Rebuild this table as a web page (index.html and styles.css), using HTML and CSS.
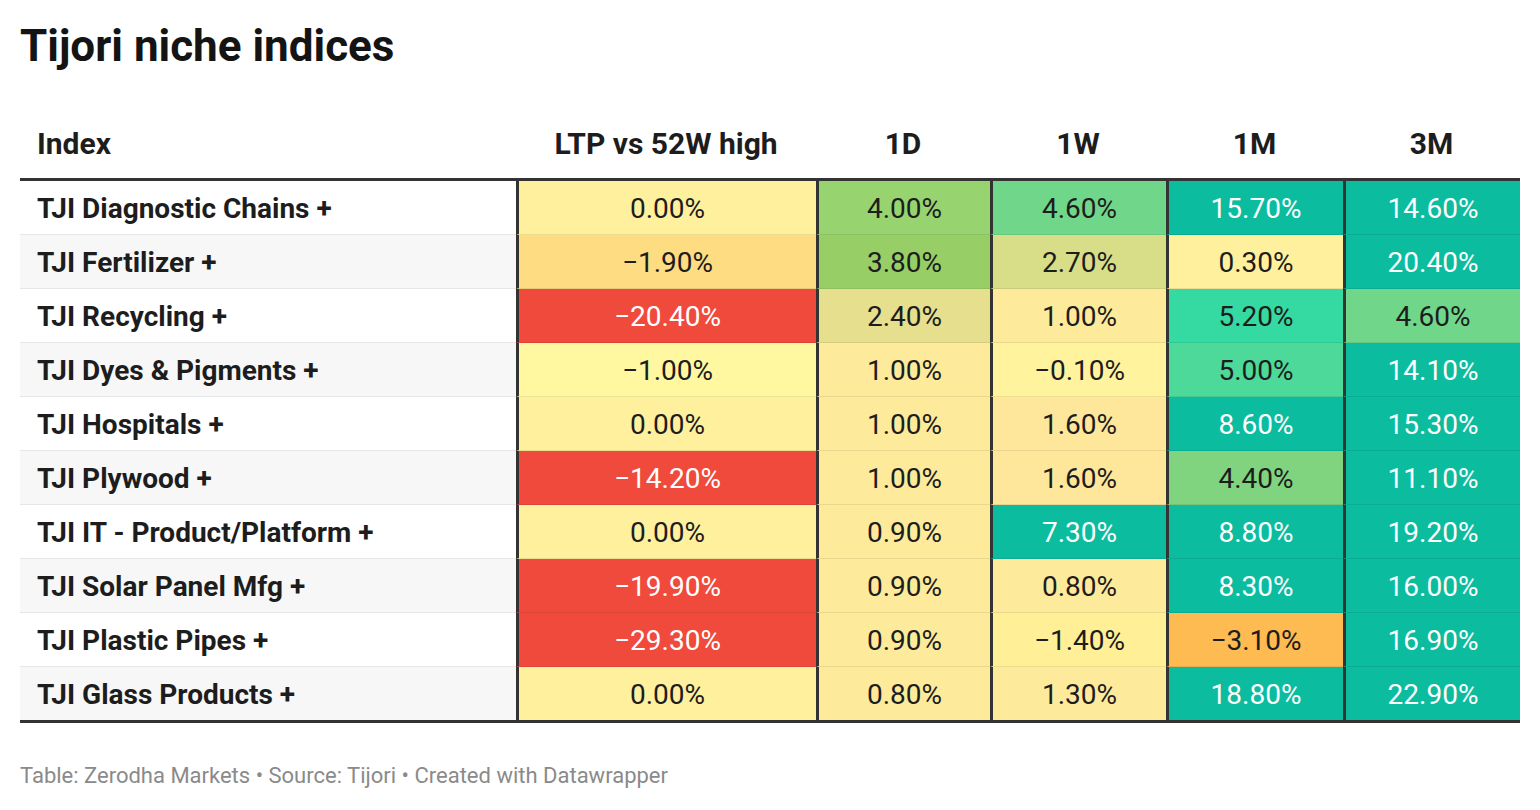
FILE: index.html
```html
<!DOCTYPE html>
<html lang="en">
<head>
<meta charset="utf-8">
<title>Tijori niche indices</title>
<link rel="stylesheet" href="styles.css">
</head>
<body>
<div class="chart">
  <h1 class="title">Tijori niche indices</h1>
  <table class="heat">
    <thead>
      <tr>
        <th class="c-name">Index</th>
        <th class="c-ltp">LTP vs 52W high</th>
        <th class="c-1d">1D</th>
        <th class="c-1w">1W</th>
        <th class="c-1m">1M</th>
        <th class="c-3m">3M</th>
      </tr>
    </thead>
    <tbody>
      <tr>
        <td class="name">TJI Diagnostic Chains +</td>
        <td class="y0">0.00%</td>
        <td class="g4">4.00%</td>
        <td class="g5">4.60%</td>
        <td class="teal">15.70%</td>
        <td class="teal">14.60%</td>
      </tr>
      <tr>
        <td class="name">TJI Fertilizer +</td>
        <td class="o1">−1.90%</td>
        <td class="g3">3.80%</td>
        <td class="g2">2.70%</td>
        <td class="y0">0.30%</td>
        <td class="teal">20.40%</td>
      </tr>
      <tr>
        <td class="name">TJI Recycling +</td>
        <td class="red">−20.40%</td>
        <td class="g1">2.40%</td>
        <td class="y1">1.00%</td>
        <td class="m5">5.20%</td>
        <td class="g5">4.60%</td>
      </tr>
      <tr>
        <td class="name">TJI Dyes &amp; Pigments +</td>
        <td class="yb">−1.00%</td>
        <td class="y1">1.00%</td>
        <td class="ym">−0.10%</td>
        <td class="m4">5.00%</td>
        <td class="teal">14.10%</td>
      </tr>
      <tr>
        <td class="name">TJI Hospitals +</td>
        <td class="y0">0.00%</td>
        <td class="y1">1.00%</td>
        <td class="y2">1.60%</td>
        <td class="teal">8.60%</td>
        <td class="teal">15.30%</td>
      </tr>
      <tr>
        <td class="name">TJI Plywood +</td>
        <td class="red">−14.20%</td>
        <td class="y1">1.00%</td>
        <td class="y2">1.60%</td>
        <td class="g44">4.40%</td>
        <td class="teal">11.10%</td>
      </tr>
      <tr>
        <td class="name">TJI IT - Product/Platform +</td>
        <td class="y0">0.00%</td>
        <td class="y1">0.90%</td>
        <td class="teal">7.30%</td>
        <td class="teal">8.80%</td>
        <td class="teal">19.20%</td>
      </tr>
      <tr>
        <td class="name">TJI Solar Panel Mfg +</td>
        <td class="red">−19.90%</td>
        <td class="y1">0.90%</td>
        <td class="y1">0.80%</td>
        <td class="teal">8.30%</td>
        <td class="teal">16.00%</td>
      </tr>
      <tr>
        <td class="name">TJI Plastic Pipes +</td>
        <td class="red">−29.30%</td>
        <td class="y1">0.90%</td>
        <td class="ym2">−1.40%</td>
        <td class="o3">−3.10%</td>
        <td class="teal">16.90%</td>
      </tr>
      <tr>
        <td class="name">TJI Glass Products +</td>
        <td class="y0">0.00%</td>
        <td class="y1">0.80%</td>
        <td class="y1">1.30%</td>
        <td class="teal">18.80%</td>
        <td class="teal">22.90%</td>
      </tr>
    </tbody>
  </table>
  <p class="footer">Table: Zerodha Markets • Source: Tijori • Created with Datawrapper</p>
</div>
</body>
</html>
```

FILE: styles.css
```css
html, body {
  margin: 0;
  padding: 0;
  background: #ffffff;
}

body {
  font-family: Roboto, "Liberation Sans", sans-serif;
  color: #1d1d1d;
}

.chart {
  padding: 20px 20px 0 20px;
}

.title {
  margin: 0;
  font-size: 44px;
  line-height: 53px;
  font-weight: 700;
  color: #141414;
}

.heat {
  margin-top: 42px;
  width: 1500px;
  border-collapse: separate;
  border-spacing: 0;
  table-layout: fixed;
}

.heat th,
.heat td {
  box-sizing: border-box;
  padding: 0;
}

.heat th {
  font-size: 30px;
  font-weight: 700;
  line-height: 32px;
  padding-top: 13px;
  padding-bottom: 18px;
  border-bottom: 3px solid #333333;
  text-align: center;
  color: #1d1d1d;
}

.heat th.c-name {
  text-align: left;
  padding-left: 17px;
  width: 496px;
}
.heat th.c-ltp { width: 300px; }
.heat th.c-1d { width: 174px; }
.heat th.c-1w { width: 176px; }
.heat th.c-1m { width: 177px; }
.heat th.c-3m { width: 177px; }

.heat td {
  height: 54px;
  font-size: 28px;
  line-height: 32px;
  padding-top: 2px;
  text-align: center;
  border-left: 3px solid #333333;
  border-bottom: 1px solid rgba(0, 0, 0, 0.08);
  color: #1d1d1d;
}

.heat td.name {
  border-left: none;
  text-align: left;
  padding-left: 17px;
  font-weight: 700;
  border-bottom-color: #e6e6e6;
  background: #ffffff;
  white-space: nowrap;
}

.heat tbody tr:nth-child(even) td.name {
  background: #f7f7f7;
}

.heat tbody tr:last-child td {
  height: 56px;
  border-bottom: 3px solid #333333;
}

.y0 { background: #fff09d; }
.yb { background: #fff8a1; }
.ym { background: #fff39e; }
.ym2 { background: #fff097; }
.y1 { background: #feea9b; }
.y2 { background: #fee69a; }
.o1 { background: #fedc81; }
.o3 { background: #fdbb51; }
.red { background: #ef4a3c; color: #ffffff !important; }
.g1 { background: #e6df8e; }
.g2 { background: #d8dd87; }
.g3 { background: #98ce66; }
.g4 { background: #97d36f; }
.g44 { background: #80d480; }
.g5 { background: #70d78a; }
.m4 { background: #4cd99a; }
.m5 { background: #35d9a2; }
.teal { background: #0bbc9f; color: #ffffff !important; }

.footer {
  margin: 40px 0 0 0;
  font-size: 22px;
  line-height: 26px;
  color: #8a8a8a;
}
```
